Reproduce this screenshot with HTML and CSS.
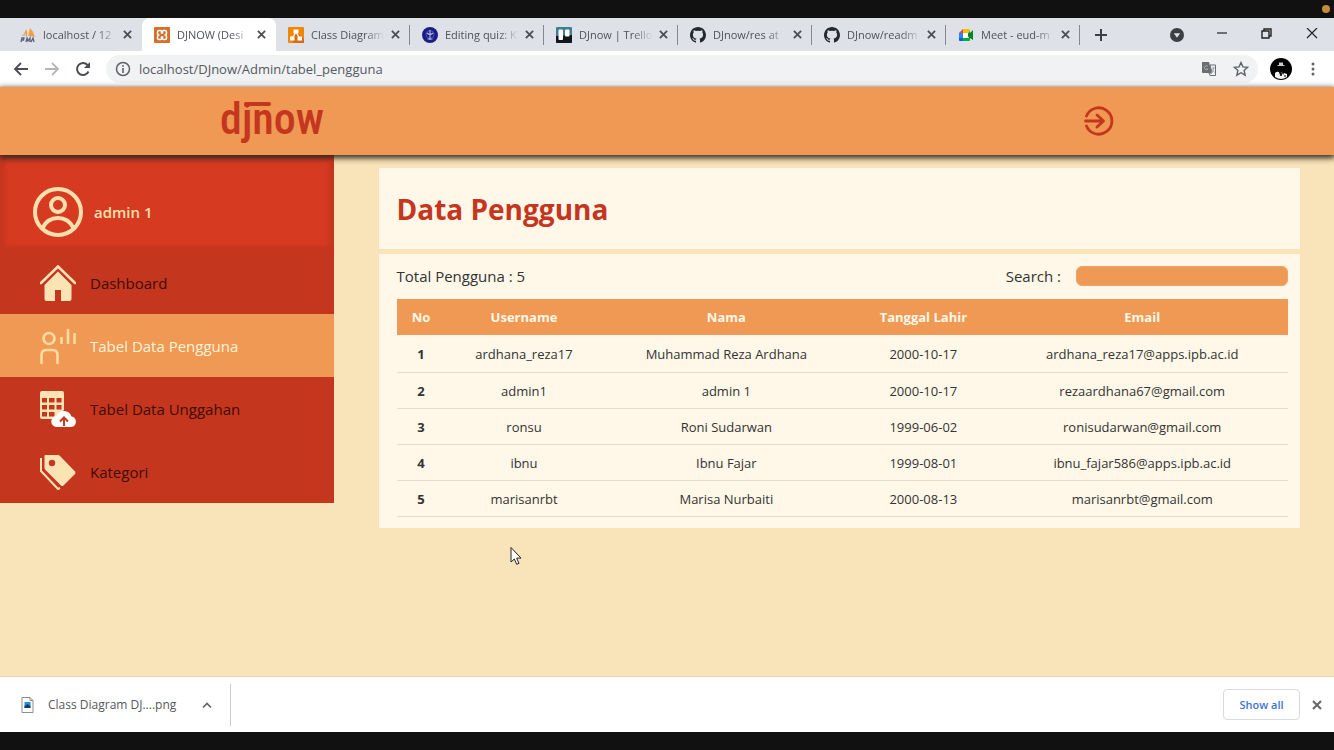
FILE: index.html
```html
<!DOCTYPE html>
<html lang="id">
<head>
<meta charset="utf-8">
<title>DJNOW</title>
<meta name="viewport" content="width=device-width, initial-scale=1">
<link rel="stylesheet" href="styles.css">
</head>
<body>
<svg class="defs" aria-hidden="true">
  <symbol id="x" viewBox="0 0 10 10"><path d="M1 1l8 8M9 1l-8 8" fill="none" stroke="currentColor" stroke-width="2"/></symbol>
  <symbol id="github" viewBox="0 0 16 16"><path fill="#24292e" d="M8 0C3.6 0 0 3.6 0 8c0 3.5 2.300 6.500 5.500 7.600.4.100.5-.2.5-.4v-1.500c-2.200.5-2.700-.9-2.700-.9-.4-.9-.9-1.200-.9-1.200-.7-.5.100-.5.100-.5.800.100 1.200.8 1.200.8.700 1.200 1.900.9 2.300.7.100-.5.300-.9.500-1.100-1.800-.2-3.600-.9-3.600-4 0-.9.300-1.600.8-2.100-.100-.2-.4-1 .1-2.100 0 0 .7-.2 2.200.8a7.500 7.500 0 014 0c1.500-1 2.200-.8 2.200-.8.500 1.100.2 1.900.1 2.100.5.500.8 1.200.8 2.100 0 3.100-1.900 3.800-3.700 4 .3.300.6.800.6 1.500v2.200c0 .2.100.5.600.4C13.700 14.500 16 11.500 16 8c0-4.400-3.600-8-8-8z"/></symbol>
</svg>

<div class="letterbox"><span class="rec-dot"></span></div>

<header class="browser">
  <div class="tabstrip">
    <div class="tab">
      <svg class="fav" viewBox="0 0 16 16"><path d="M2 9q3-3 4-7 2 3 1 7zM8 9q1-4 2-8 4 4 5 9-3-1-7-1z" fill="#f2a13c"/><path d="M1 9l5-3v3z" fill="#c9c4bd"/><path d="M1 15l1-4h2l-.5 2H2M6 15l1-4 1 3 2-3v4M11 15l2-4 1 4" fill="none" stroke="#59637f" stroke-width="1.300"/></svg>
      <span class="tab-title">localhost / 12</span>
      <button class="tab-close" aria-label="Close tab"><svg><use href="#x"/></svg></button>
    </div>
    <div class="tab active">
      <svg class="fav" viewBox="0 0 16 16"><rect width="16" height="16" rx="1" fill="#d96e2c"/><path d="M5 3.500h1.500q1 0 1 1v1.500h1V4.500q0-1 1-1H11q1.500 0 1.500 1.500v1q0 1.500-1 2 1 .5 1 2v1q0 1.500-1.500 1.500H9.500q-1 0-1-1V10h-1v1.500q0 1-1 1H5q-1.500 0-1.500-1.500v-1q0-1.500 1-2-1-.5-1-2V5q0-1.500 1.500-1.500z" fill="none" stroke="#fff" stroke-width="1.500"/></svg>
      <span class="tab-title">DJNOW (Desi</span>
      <button class="tab-close" aria-label="Close tab"><svg><use href="#x"/></svg></button>
    </div>
    <div class="tab">
      <svg class="fav" viewBox="0 0 16 16"><rect width="16" height="16" rx="1" fill="#f08705"/><path d="M9 5l7 7v4H6l-3-3z" fill="#df6c0c"/><path d="M8 5l-3.500 6M8 5l3.500 6" stroke="#fff" stroke-width="1.300"/><path d="M5.500 2.500h5v4h-5zM2 9.500h4.500v4H2zM9.500 9.500H14v4H9.500z" fill="#fff"/></svg>
      <span class="tab-title">Class Diagram</span>
      <button class="tab-close" aria-label="Close tab"><svg><use href="#x"/></svg></button>
    </div>
    <div class="tab">
      <svg class="fav" viewBox="0 0 16 16"><circle cx="8" cy="8" r="8" fill="#1b1d85"/><circle cx="8" cy="7.500" r="4" fill="none" stroke="#4e53a8"/><path d="M8 3v10M5 6q3 3 6 0M5.500 12h5" stroke="#aeb4e0" stroke-width="1.200" fill="none"/></svg>
      <span class="tab-title">Editing quiz: K</span>
      <button class="tab-close" aria-label="Close tab"><svg><use href="#x"/></svg></button>
    </div>
    <div class="tab">
      <svg class="fav" viewBox="0 0 16 16"><rect width="16" height="16" rx="1" fill="#3f7e99"/><path d="M0 9l16-1v7a1 1 0 01-1 1H1a1 1 0 01-1-1z" fill="#12141f"/><rect x="2.500" y="2.500" width="4.500" height="10.500" rx="1" fill="#fff"/><rect x="9" y="2.500" width="4.500" height="7" rx="1" fill="#fff"/></svg>
      <span class="tab-title">DJnow | Trello</span>
      <button class="tab-close" aria-label="Close tab"><svg><use href="#x"/></svg></button>
    </div>
    <div class="tab">
      <svg class="fav"><use href="#github"/></svg>
      <span class="tab-title">DJnow/res at</span>
      <button class="tab-close" aria-label="Close tab"><svg><use href="#x"/></svg></button>
    </div>
    <div class="tab">
      <svg class="fav"><use href="#github"/></svg>
      <span class="tab-title">DJnow/readm</span>
      <button class="tab-close" aria-label="Close tab"><svg><use href="#x"/></svg></button>
    </div>
    <div class="tab">
      <svg class="fav" viewBox="0 0 16 16"><path d="M1 6l4-4v4z" fill="#e94335"/><path d="M5 2h6a1 1 0 011 1v3H5z" fill="#fbbc04"/><path d="M1 6h4v5H1z" fill="#2684fc"/><path d="M1 11h4v3H2a1 1 0 01-1-1z" fill="#0066da"/><path d="M5 11h7v2a1 1 0 01-1 1H5z" fill="#00ac47"/><path d="M12 4v8l-3-4zM12 6l3-3v10l-3-2z" fill="#00832d"/><path d="M5 6h5v5H5z" fill="#fff"/></svg>
      <span class="tab-title">Meet - eud-m</span>
      <button class="tab-close" aria-label="Close tab"><svg><use href="#x"/></svg></button>
    </div>
    <button class="new-tab" aria-label="New tab"><svg viewBox="0 0 12 12"><path d="M6 0v12M0 6h12" stroke="#3c4043" stroke-width="2"/></svg></button>
    <div class="window-controls">
      <button aria-label="Search tabs"><svg viewBox="0 0 14 14"><circle cx="7" cy="7" r="7" fill="#3c4043"/><path d="M3.800 5.300h6.400L7 9.800z" fill="#dee1e6"/></svg></button>
      <button aria-label="Minimize"><svg viewBox="0 0 14 14"><path d="M2 5h10" stroke="#222" stroke-width="1.200"/></svg></button>
      <button aria-label="Restore"><svg viewBox="0 0 14 14"><path d="M2 3h7v7H2zM4 3V1h7v7H9" fill="none" stroke="#222" stroke-width="1.400"/></svg></button>
      <button aria-label="Close window"><svg viewBox="0 0 14 14"><path d="M2 0l10 10M12 0L2 10" stroke="#222" stroke-width="1.200"/></svg></button>
    </div>
  </div>
  <div class="toolbar">
    <button aria-label="Back"><svg viewBox="0 0 16 16"><path d="M15 8H2M8 2L2 8l6 6" fill="none" stroke="#4a4d51" stroke-width="1.800"/></svg></button>
    <button aria-label="Forward" disabled><svg viewBox="0 0 16 16"><path d="M1 8h13M8 2l6 6-6 6" fill="none" stroke="#b4b6b9" stroke-width="1.800"/></svg></button>
    <button aria-label="Reload"><svg viewBox="0 0 16 16"><path d="M13.500 10.500A6 6 0 1112.500 4" fill="none" stroke="#4a4d51" stroke-width="2"/><path d="M15 1v6H9z" fill="#4a4d51"/></svg></button>
    <div class="omnibox">
      <svg viewBox="0 0 16 16"><circle cx="8" cy="8" r="6.500" fill="none" stroke="#5f6368" stroke-width="1.500"/><path d="M8 7v5M8 4v1.800" stroke="#5f6368" stroke-width="1.600"/></svg>
      <input type="text" aria-label="Address" value="localhost/DJnow/Admin/tabel_pengguna">
      <button aria-label="Translate"><svg viewBox="0 0 16 16"><path d="M1 1h7l3 11H2a1 1 0 01-1-1z" fill="#6a6e72"/><path d="M9 4h5.500v10.500H9L8 12h3z" fill="#f1f3f4" stroke="#6a6e72"/><path d="M7 5.500A2 2 0 107 8H5.500M11 7h3M12.500 6v1q0 3-2 4.500M11.500 8.500l2 3" fill="none" stroke="#a9adb1"/></svg></button>
      <button aria-label="Bookmark"><svg viewBox="0 0 16 16"><path d="M8 1.500l1.900 4.400 4.800.4-3.600 3.200 1.100 4.700L8 11.700l-4.200 2.500 1.100-4.700L1.300 6.300l4.800-.4z" fill="none" stroke="#5f6368" stroke-width="1.400"/></svg></button>
    </div>
    <button class="avatar" aria-label="Profile"><svg viewBox="0 0 22 22"><circle cx="11" cy="11" r="11" fill="#000"/><path d="M9 4.500h4v2.500h1.500v1h-7V7H9z" fill="#ccc"/><path d="M5 15q2-2 4-1l1 3 1-3h1l1 3 1-2 3 1v3q-6 4-12 0z" fill="#f4f4f4"/><path d="M10 14l1 4 1-4M14 18h2" stroke="#000" fill="none"/></svg></button>
    <button class="menu" aria-label="Menu"><svg viewBox="0 0 4 16"><g fill="#5f6368"><circle cx="2" cy="3" r="1.500"/><circle cx="2" cy="8" r="1.500"/><circle cx="2" cy="13" r="1.500"/></g></svg></button>
  </div>
</header>

<div class="site">
  <header class="site-header">
    <a class="logo" href="#">djnow<span class="logo-bar"></span></a>
    <a class="logout" href="#" aria-label="Logout"><svg viewBox="0 0 30 30"><path d="M2.500 10A13.200 13.200 0 112.500 20" fill="none" stroke="#c5361e" stroke-width="2.800" stroke-linecap="round"/><path d="M1.500 15H19M13 9l6.500 6-6.500 6" fill="none" stroke="#c5361e" stroke-width="2.800" stroke-linecap="round" stroke-linejoin="round"/></svg></a>
  </header>

  <div class="columns">
    <nav class="sidebar">
      <div class="profile">
        <svg viewBox="0 0 50 50"><g fill="none" stroke="#fbe0ad" stroke-width="4"><circle cx="25" cy="25" r="23"/><circle cx="25" cy="18" r="7"/><path d="M9.500 41q5-10 15.500-10t15.500 10"/></g></svg>
        <span>admin 1</span>
      </div>
      <a href="#"><svg viewBox="0 0 36 36"><path d="M1 18L18 1.500 35 18" fill="none" stroke="#fbe3b4" stroke-width="2.600" stroke-linecap="round"/><path d="M4.500 20L18 6.500 31.500 20v14a2 2 0 01-2 2H21V25h-6v11H6.500a2 2 0 01-2-2z" fill="#fbe3b4"/></svg><span>Dashboard</span></a>
      <a href="#" class="current"><svg viewBox="0 0 36 36"><g fill="none" stroke="#fcdca0" stroke-width="2.600"><circle cx="9" cy="10.500" r="5.500"/><path d="M1.500 36v-9q0-5 5-5h6q5 0 5 5v9"/><path d="M21.500 9v7M28 1v15M34.500 5v11"/></g></svg><span>Tabel Data Pengguna</span></a>
      <a href="#"><svg viewBox="0 0 36 36"><path d="M2 0h20a2 2 0 012 2v17l-11 9H2a2 2 0 01-2-2V2a2 2 0 012-2z" fill="#fbe3b4"/><path d="M2 7h5v4.500H2zM9 7h5.500v4.500H9zM16.500 7h5v4.500h-5zM2 14h5v4.500H2zM9 14h5.500v4.500H9zM16.500 14h5v4.500h-5zM2 21h5v4.500H2zM9 21h5.500v4.500H9z" fill="#c5361e"/><path d="M17 36a5.500 5.500 0 01-.5-11 8 8 0 0115 .5A5.300 5.300 0 0131 36z" fill="#fff"/><path d="M24 35v-8M20 30.500l4-4 4 4" fill="none" stroke="#c5361e" stroke-width="2"/></svg><span>Tabel Data Unggahan</span></a>
      <a href="#"><svg viewBox="0 0 36 36"><path d="M1 4v13l17 18 2-1" fill="none" stroke="#fbe3b4" stroke-width="2"/><path d="M5 1h13q1 0 2 1l15 15.500q1 1.500 0 2.500L23.500 31.500q-1.500 1-2.500 0L5.500 16q-1-1-1-2V2z" fill="#fbe3b4"/><circle cx="12" cy="9" r="3.200" fill="#c5361e"/></svg><span>Kategori</span></a>
    </nav>

    <main class="content">
      <section class="card title-card"><h1>Data Pengguna</h1></section>
      <section class="card table-card">
        <div class="table-tools">
          <span>Total Pengguna : 5</span>
          <div class="search"><label for="search">Search :</label><input id="search" type="text"></div>
        </div>
        <table>
          <colgroup><col class="c-no"><col class="c-user"><col class="c-name"><col class="c-date"><col class="c-mail"></colgroup>
          <thead><tr><th>No</th><th>Username</th><th>Nama</th><th>Tanggal Lahir</th><th>Email</th></tr></thead>
          <tbody>
            <tr><th>1</th><td>ardhana_reza17</td><td>Muhammad Reza Ardhana</td><td>2000-10-17</td><td>ardhana_reza17@apps.ipb.ac.id</td></tr>
            <tr><th>2</th><td>admin1</td><td>admin 1</td><td>2000-10-17</td><td>rezaardhana67@gmail.com</td></tr>
            <tr><th>3</th><td>ronsu</td><td>Roni Sudarwan</td><td>1999-06-02</td><td>ronisudarwan@gmail.com</td></tr>
            <tr><th>4</th><td>ibnu</td><td>Ibnu Fajar</td><td>1999-08-01</td><td>ibnu_fajar586@apps.ipb.ac.id</td></tr>
            <tr><th>5</th><td>marisanrbt</td><td>Marisa Nurbaiti</td><td>2000-08-13</td><td>marisanrbt@gmail.com</td></tr>
          </tbody>
        </table>
      </section>
    </main>
  </div>
</div>

<footer class="downloads">
  <div class="download">
    <svg class="file" viewBox="0 0 12 16"><path d="M.5.5h8l3 3v12H.5z" fill="#fff" stroke="#8b8f94"/><path d="M8.500.5v3h3" fill="none" stroke="#8b8f94"/><rect x="3" y="5" width="6" height="6" fill="#2d8fd4"/><path d="M3 11V9l3-2 3 2v2z" fill="#123f73"/></svg>
    <span>Class Diagram DJ....png</span>
    <button aria-label="Download options"><svg viewBox="0 0 10 6"><path d="M1 5.500l4-4 4 4" fill="none" stroke="#5f6368" stroke-width="1.600"/></svg></button>
  </div>
  <button class="show-all">Show all</button>
  <button class="close-bar" aria-label="Close downloads"><svg><use href="#x"/></svg></button>
</footer>
<div class="letterbox"></div>

<svg class="pointer" viewBox="0 0 12 19"><path d="M1 1v14.500l3.300-3 2.400 5.300 2.300-1-2.400-5.200H11z" fill="#fff" stroke="#222"/></svg>
</body>
</html>
```
FILE: styles.css
```css
* { box-sizing: border-box; }
body {
  margin: 0;
  min-height: 100vh;
  display: flex;
  flex-direction: column;
  font-family: "Open Sans", "Noto Sans", sans-serif;
  background: #fff;
}
button { border: 0; padding: 0; background: none; font: inherit; display: grid; place-items: center; }
svg { display: block; flex: none; }
a { text-decoration: none; }
.defs { position: absolute; width: 0; height: 0; }

.letterbox { height: 18px; flex: none; background: #111; display: flex; justify-content: flex-end; align-items: center; padding-right: 4px; }
.rec-dot { width: 8px; height: 8px; border-radius: 50%; background: #c98a35; }

/* Browser frame */
.tabstrip { height: 33px; background: #dee1e8; display: flex; padding-left: 8px; }
.tab {
  flex: 0 1 134px;
  min-width: 0;
  display: flex;
  align-items: center;
  padding: 0 10px 0 12px;
  background: linear-gradient(#85888e, #85888e) right center / 1px 20px no-repeat;
  color: #4f5257;
}
.tab:first-child { background: none; }
.tab.active { background: #fff; border-radius: 8px 8px 0 0; }
.fav { width: 16px; height: 16px; }
.tab-title {
  flex: 1;
  min-width: 0;
  margin-left: 7px;
  font-size: 11px;
  line-height: 18px;
  white-space: nowrap;
  overflow: hidden;
  -webkit-mask-image: linear-gradient(to right, #000 70%, transparent 96%);
  mask-image: linear-gradient(to right, #000 70%, transparent 96%);
}
.tab-close { width: 10px; height: 10px; margin-left: 2px; color: #4a4d51; }
.tab-close svg { width: 9px; height: 9px; }
.new-tab { width: 42px; }
.new-tab svg { width: 12px; height: 12px; }
.window-controls { margin-left: auto; display: flex; }
.window-controls button { width: 45px; }
.window-controls svg { width: 14px; height: 14px; }

.toolbar { height: 36px; display: flex; align-items: center; padding: 0 13px; gap: 15px; background: #fff; }
.toolbar svg { width: 16px; height: 16px; }
.omnibox {
  flex: 1;
  height: 28px;
  border-radius: 14px;
  background: #f0f2f4;
  display: flex;
  align-items: center;
  gap: 16px;
  padding: 0 9px;
}
.omnibox input {
  flex: 1;
  min-width: 0;
  margin-left: -8px;
  padding: 0;
  border: 0;
  outline: 0;
  background: none;
  font: 13px/20px "Open Sans", sans-serif;
  color: #55585c;
}
.toolbar .avatar svg { width: 22px; height: 22px; }
.toolbar .avatar { margin: 0 -2px 0 -3px; }
.toolbar .menu { width: 16px; }
.toolbar .menu svg { width: 4px; }

/* Site */
.site { flex: 1; background: #f9e3b8; }
.site-header {
  position: relative;
  height: 68px;
  padding: 0 16.5%;
  display: flex;
  justify-content: space-between;
  align-items: center;
  background: #ef9954;
  box-shadow: 0 2px 6px 1px #2b2622;
}
.logo {
  position: relative;
  padding-bottom: 4px;
  font: 500 44px/56px "Roboto Condensed", "Liberation Sans Narrow", sans-serif;
  color: #c5361e;
}
.logo-bar { position: absolute; left: 24px; top: 11px; width: 27px; height: 4px; border-radius: 2px; background: #c5361e; }
.logout svg { width: 30px; height: 30px; }

.columns { display: flex; align-items: flex-start; }
.sidebar { width: 25%; background: #c5361e; font-size: 15px; line-height: 20px; }
.profile {
  height: 96px;
  padding: 18px 33px 0;
  display: flex;
  align-items: center;
  gap: 11px;
  background: #d63b22;
  box-shadow: inset 0 0 4px 5px #c5361e;
  color: #fbe0ad;
  font-weight: 600;
}
.profile svg { width: 50px; height: 50px; }
.sidebar a { height: 63px; display: flex; align-items: center; gap: 14px; padding-left: 40px; color: #3d0d06; }
.sidebar a svg { width: 36px; height: 36px; }
.sidebar .current { background: #ef9954; color: #fff4d8; }

.content { flex: 1; min-width: 0; margin: 13px 34px 0 45px; display: grid; gap: 5px; }
.card { background: #fff8e8; padding: 0 12px 0 18px; }
.title-card { height: 81px; display: flex; align-items: center; }
h1 { margin: 0; font-size: 28px; line-height: 40px; color: #c5361e; }
.table-card { padding-bottom: 11px; color: #333; }
.table-tools { height: 45px; padding-bottom: 2px; display: flex; justify-content: space-between; align-items: center; font-size: 15px; line-height: 20px; }
.search { display: flex; align-items: center; gap: 15px; }
.search input { width: 212px; height: 20px; padding: 0 6px; border: 1px solid #e8a56f; border-radius: 6px; background: #ef9954; }
table { width: 100%; border-collapse: collapse; table-layout: fixed; font-size: 13px; line-height: 18px; text-align: center; }
.c-no { width: 5.5%; }
.c-user { width: 17.6%; }
.c-name { width: 27.8%; }
.c-date { width: 16.4%; }
.c-mail { width: 32.7%; }
thead th { height: 36px; padding: 0; background: #ef9954; color: #fff8e8; }
tbody th, tbody td { height: 36px; padding: 2px 0 0; border-bottom: 1px solid #e3dccf; }
tbody tr:first-child > * { height: 37px; }

/* Download shelf */
.downloads { height: 56px; background: #fff; border-top: 1px solid #e6d3b0; display: flex; align-items: center; padding-right: 12px; }
.download { height: 42px; display: flex; align-items: center; padding: 0 18px 0 21px; border-right: 1px solid #c9cbd0; font-size: 12px; color: #55585c; }
.download .file { width: 13px; height: 16px; margin-right: 14px; }
.download button { margin-left: 26px; }
.download button svg { width: 10px; height: 6px; }
.show-all { margin-left: auto; width: 77px; height: 31px; border: 1px solid #d8dbe0; border-radius: 4px; color: #3f73cf; font-size: 11px; font-weight: 600; }
.close-bar { margin-left: 12px; color: #666; }
.close-bar svg { width: 10px; height: 10px; }

.pointer { position: absolute; left: 510px; top: 546px; width: 12px; height: 20px; }
```
